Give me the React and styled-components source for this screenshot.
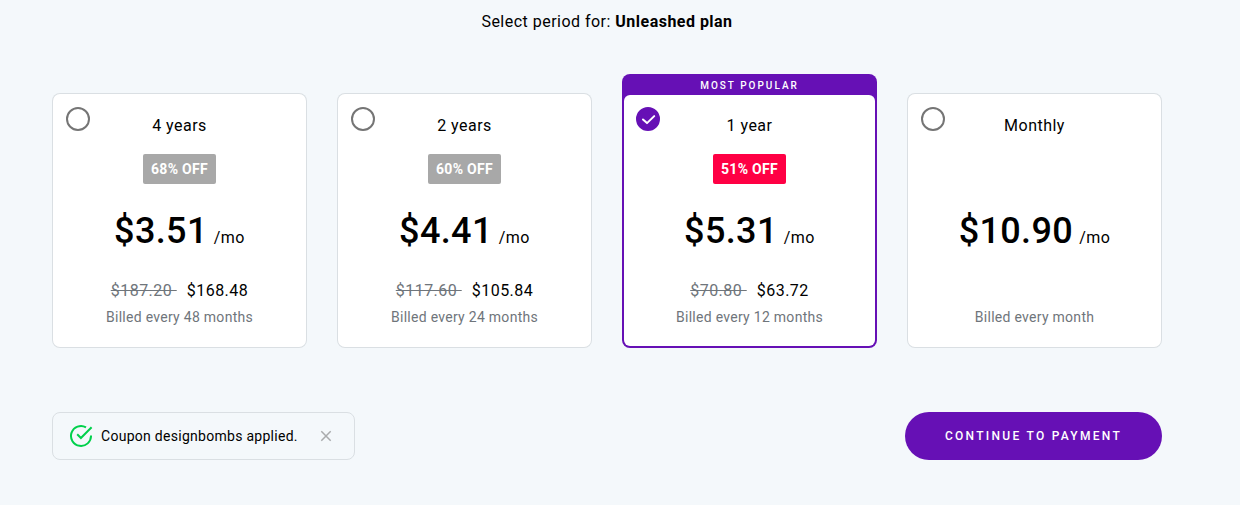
import React, { useState } from "react";
import styled, { createGlobalStyle, css } from "styled-components";

const purple = "#6610b5";

const GlobalStyle = createGlobalStyle`
  *, *::before, *::after { box-sizing: border-box; }
  body {
    margin: 0;
    background: #f4f8fb;
    color: #000;
    font: 400 16px/24px Roboto, "Liberation Sans", sans-serif;
    letter-spacing: 0.03em;
  }
  button { font: inherit; cursor: pointer; }
`;

const smallText = css`
  font-size: 14px;
  letter-spacing: 0.02em;
`;

const Page = styled.main`
  padding: 10px 78px 44px 52px;
`;

const Heading = styled.h1`
  margin: 0;
  font-size: 16px;
  font-weight: 400;
  line-height: 24px;
  text-align: center;
`;

const Plans = styled.fieldset`
  display: grid;
  grid-template-columns: repeat(auto-fit, minmax(240px, 1fr));
  gap: 30px;
  align-items: end;
  margin: 40px 0 0;
  padding: 0;
  border: 0;
`;

const Card = styled.label`
  display: block;
  border-radius: 8px;
  padding: ${(p) => (p.$popular ? "0 2px 2px" : "1px")};
  background: ${(p) => (p.$popular ? purple : "#dadfe3")};
  cursor: pointer;
`;

const Banner = styled.div`
  padding-top: 2px;
  color: #fff;
  font-size: 10px;
  font-weight: 500;
  line-height: 19px;
  letter-spacing: 2px;
  text-align: center;
`;

const Panel = styled.div`
  display: flex;
  flex-direction: column;
  align-items: center;
  padding: ${(p) => (p.$popular ? "12px 12px 19px" : "13px 13px 20px")};
  border-radius: ${(p) => (p.$popular ? "6px" : "7px")};
  background: #fff;
`;

const CardHeader = styled.div`
  display: grid;
  grid-template-columns: 24px 1fr 24px;
  align-self: stretch;
`;

const RadioBox = styled.span`
  display: grid;
  width: 24px;
  height: 24px;

  > * { grid-area: 1 / 1; }
  > svg { pointer-events: none; }
`;

const Radio = styled.input`
  appearance: none;
  width: 24px;
  height: 24px;
  margin: 0;
  border: 2px solid #757575;
  border-radius: 50%;
  background: #fff;
  cursor: pointer;

  &:checked {
    border-color: ${purple};
    background: ${purple};
  }
`;

const Period = styled.span`
  padding-top: 7px;
  text-align: center;
`;

const discountSlot = css`
  height: 30px;
  margin-top: 16px;
`;

const Discount = styled.span`
  ${discountSlot}
  ${smallText}
  padding: 0 8px;
  border-radius: 2px;
  background: ${(p) => (p.$active ? "#ff0044" : "#a8a8a8")};
  color: #fff;
  font-weight: 700;
  line-height: 30px;
`;

const NoDiscount = styled.span`
  ${discountSlot}
`;

const Price = styled.div`
  display: flex;
  align-items: baseline;
  gap: 6px;
  margin-top: 23px;
`;

const Amount = styled.strong`
  font-size: 36px;
  font-weight: 500;
  line-height: 48px;
  letter-spacing: 0.01em;
`;

const Totals = styled.div`
  display: flex;
  gap: 10px;
  height: 24px;
  margin-top: 24px;
`;

const OldTotal = styled.s`
  color: #6f757b;
  white-space: pre;
`;

const Billing = styled.div`
  ${smallText}
  margin-top: 4px;
  color: #6f757b;
  line-height: 20px;
`;

const Footer = styled.footer`
  display: flex;
  flex-wrap: wrap;
  justify-content: space-between;
  gap: 16px;
  margin-top: 64px;
`;

const Coupon = styled.div`
  ${smallText}
  display: flex;
  align-items: center;
  gap: 8px;
  height: 48px;
  padding: 0 16px;
  border: 1px solid #dadfe3;
  border-radius: 8px;
`;

const Dismiss = styled.button`
  display: grid;
  place-items: center;
  width: 24px;
  height: 24px;
  margin-left: 8px;
  padding: 0;
  border: 0;
  background: none;
`;

const Continue = styled.button`
  height: 48px;
  padding: 0 40px;
  border: 0;
  border-radius: 24px;
  background: ${purple};
  color: #fff;
  && {
    font-size: 12px;
    font-weight: 500;
    letter-spacing: 0.19em;
  }
`;

const plans = [
  { id: "4y", period: "4 years", off: "68% OFF", price: "$3.51", old: "$187.20", total: "$168.48", billed: "Billed every 48 months" },
  { id: "2y", period: "2 years", off: "60% OFF", price: "$4.41", old: "$117.60", total: "$105.84", billed: "Billed every 24 months" },
  { id: "1y", period: "1 year", off: "51% OFF", price: "$5.31", old: "$70.80", total: "$63.72", billed: "Billed every 12 months", popular: true },
  { id: "1m", period: "Monthly", price: "$10.90", billed: "Billed every month" },
];

function PlanCard({ plan, selected, onSelect }) {
  return (
    <Card $popular={plan.popular}>
      {plan.popular && <Banner>MOST POPULAR</Banner>}
      <Panel $popular={plan.popular}>
        <CardHeader>
          <RadioBox>
            <Radio type="radio" name="period" value={plan.id} checked={selected} onChange={onSelect} />
            {selected && (
              <svg width="24" height="24" viewBox="0 0 24 24" fill="none" aria-hidden="true">
                <path d="M7 12.5l4 3.6 7.2-7" stroke="#fff" strokeWidth="2" strokeLinecap="round" strokeLinejoin="round" />
              </svg>
            )}
          </RadioBox>
          <Period>{plan.period}</Period>
        </CardHeader>
        {plan.off ? <Discount $active={selected}>{plan.off}</Discount> : <NoDiscount />}
        <Price>
          <Amount>{plan.price}</Amount>
          <span>/mo</span>
        </Price>
        <Totals>
          {plan.old && <OldTotal>{plan.old + " "}</OldTotal>}
          {plan.total && <span>{plan.total}</span>}
        </Totals>
        <Billing>{plan.billed}</Billing>
      </Panel>
    </Card>
  );
}

export default function App() {
  const [selected, setSelected] = useState("1y");
  const [coupon, setCoupon] = useState(true);

  return (
    <>
      <GlobalStyle />
      <Page>
        <Heading id="period-heading">
          Select period for: <strong>Unleashed plan</strong>
        </Heading>
        <Plans aria-labelledby="period-heading">
          {plans.map((plan) => (
            <PlanCard
              key={plan.id}
              plan={plan}
              selected={selected === plan.id}
              onSelect={() => setSelected(plan.id)}
            />
          ))}
        </Plans>
        <Footer>
          {coupon ? (
            <Coupon>
              <svg width="24" height="24" viewBox="0 0 24 24" fill="none" stroke="#00d04b" strokeWidth="2" aria-hidden="true">
                <path d="M17 3.3A10 10 0 1 0 22 11.5" />
                <path d="M8.2 10.3l3.7 3.7L22.6 3.3" />
              </svg>
              <span>Coupon designbombs applied.</span>
              <Dismiss type="button" aria-label="Remove coupon" onClick={() => setCoupon(false)}>
                <svg width="12" height="12" viewBox="0 0 12 12" stroke="#a9abad" strokeWidth="1.5" aria-hidden="true">
                  <path d="M1.3 1.3l9.4 9.4M10.7 1.3l-9.4 9.4" />
                </svg>
              </Dismiss>
            </Coupon>
          ) : (
            <span />
          )}
          <Continue type="button">CONTINUE TO PAYMENT</Continue>
        </Footer>
      </Page>
    </>
  );
}
